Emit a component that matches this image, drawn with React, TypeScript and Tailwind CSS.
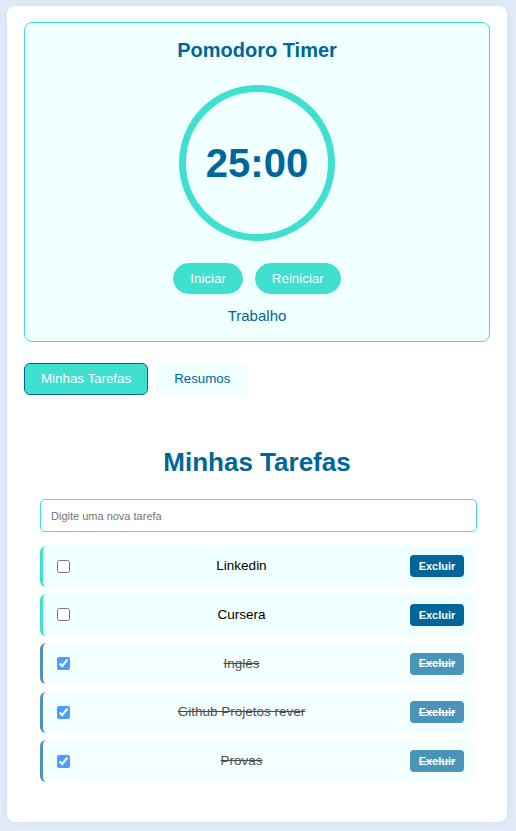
import React from "react";

type Task = { name: string; done: boolean };

const tasks: Task[] = [
  { name: "Linkedin", done: false },
  { name: "Cursera", done: false },
  { name: "Inglês", done: true },
  { name: "Github Projetos rever", done: true },
  { name: "Provas", done: true },
];

function TaskItem({ task }: { task: Task }) {
  return (
    <li
      className={
        "flex h-[41.5px] items-center rounded-md border-l-[3px] bg-[#f0ffff] pl-[10px] pr-[10px] " +
        (task.done ? "border-[#006699] opacity-70 line-through" : "border-[#40e0d0]")
      }
    >
      <input
        type="checkbox"
        checked={task.done}
        readOnly
        className="ml-[4px] mr-[3px] h-[13px] w-[13px]"
      />
      <span className="flex-1 text-center text-[13.5px] text-black">{task.name}</span>
      <button
        className={
          "h-[22px] w-[54px] rounded-[4px] bg-[#006699] text-[11px] font-bold text-white " +
          (task.done ? "line-through" : "")
        }
      >
        Excluir
      </button>
    </li>
  );
}

export default function App() {
  return (
    <div
      className="min-h-screen bg-[#e1ecf8] px-[7px] pt-[6px] pb-[9px]"
      style={{ fontFamily: '"Liberation Sans", Arial, sans-serif' }}
    >
      <div className="w-[500px] rounded-lg bg-white px-[17px] pt-[16px] pb-[40px] shadow-[0_0_10px_rgba(0,80,160,0.08)]">
        {/* Timer */}
        <section className="flex h-[320px] flex-col items-center rounded-lg border border-[#40e0d0] bg-[#f0ffff] pt-[16px]">
          <h2 className="text-[20px] leading-[23px] font-bold text-[#006699]">Pomodoro Timer</h2>
          <div className="mt-[23px] flex h-[156px] w-[156px] items-center justify-center rounded-full border-[7px] border-[#40e0d0]">
            <span className="text-[40px] leading-none font-bold text-[#006699]">25:00</span>
          </div>
          <div className="mt-[22px] flex gap-[12px]">
            <button className="h-[31px] rounded-full border border-[#40e0d0] bg-[#40e0d0] px-4 text-[13.333px] text-white">
              Iniciar
            </button>
            <button className="h-[31px] rounded-full border border-[#40e0d0] bg-[#40e0d0] px-4 text-[13.333px] text-white">
              Reiniciar
            </button>
          </div>
          <p className="mt-[13px] text-[15px] leading-[17px] text-[#006699]">Trabalho</p>
        </section>

        {/* Tabs */}
        <div className="mt-[21px] flex gap-[8px]">
          <button className="h-[32px] rounded-md border border-[#006699] bg-[#40e0d0] px-[16px] text-[13.333px] text-white">
            Minhas Tarefas
          </button>
          <button className="h-[32px] rounded-md border border-[#f0ffff] bg-[#f0ffff] px-[17px] text-[13.333px] text-[#006699]">
            Resumos
          </button>
        </div>

        {/* Tasks */}
        <section className="px-[16px]">
          <h1 className="mt-[52px] text-center text-[26px] leading-[30px] font-bold text-[#006699]">
            Minhas Tarefas
          </h1>
          <input
            type="text"
            placeholder="Digite uma nova tarefa"
            className="mt-[22px] h-[33px] w-[calc(100%+3px)] rounded-[5px] border border-[#40e0d0] bg-white px-[10px] text-[11px] placeholder:text-[#757575]"
          />
          <ul className="mt-[13.5px] flex flex-col gap-[7.2px]">
            {tasks.map((t) => (
              <TaskItem key={t.name} task={t} />
            ))}
          </ul>
        </section>
      </div>
    </div>
  );
}
